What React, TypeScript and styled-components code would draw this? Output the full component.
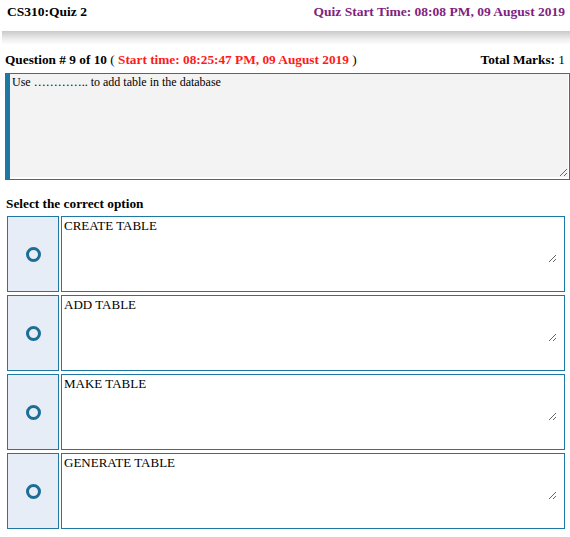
import React from 'react'
import styled, { createGlobalStyle } from 'styled-components'

const GlobalStyle = createGlobalStyle`
  body {
    margin: 0;
    background: #fff;
    font-family: "Liberation Serif", "Times New Roman", serif;
    color: #000;
  }
`

const blue = '#1f77a3'

const Header = styled.div`
  display: flex;
  justify-content: space-between;
  align-items: flex-start;
  height: 31px;
  box-sizing: border-box;
  padding: 4px 5px 0 7px;
  font-size: 13.5px;
  font-weight: bold;
`

const QuizTime = styled.span`
  color: #7f2380;
`

const ShadowBand = styled.div`
  height: 14px;
  margin-left: 2px;
  background: linear-gradient(to bottom, #c9c9c9 0%, #ececec 55%, #fff 100%);
`

const QuestionBar = styled.div`
  display: flex;
  justify-content: space-between;
  align-items: center;
  margin-top: 7px;
  height: 16px;
  padding: 0 5px 0 5px;
  font-size: 13.3px;
  font-weight: bold;
`

const Red = styled.span`
  color: #ff1a1a;
`

const Plain = styled.span`
  font-weight: normal;
`

const QuestionBox = styled.div`
  margin: 5px 0 0 5px;
  height: 105px;
  border: 1px solid ${blue};
  border-left: 5px solid ${blue};
  display: flex;
`

const QuestionText = styled.textarea`
  flex: 1;
  height: 101px;
  margin: 0 1px 0 0;
  border: none;
  outline: none;
  background: #f3f3f3;
  font-family: "Liberation Serif", "Times New Roman", serif;
  font-size: 12px;
  padding: 1px 2px;
  resize: vertical;
`

const SectionTitle = styled.div`
  margin: 16px 0 0 6px;
  height: 16px;
  font-size: 13.3px;
  font-weight: bold;
`

const Options = styled.div`
  display: grid;
  grid-template-columns: 52px 1fr;
  column-gap: 2px;
  row-gap: 3px;
  margin: 4px 5px 0 7px;
`

const RadioCell = styled.div`
  box-sizing: border-box;
  height: 76px;
  background: #e6edf7;
  border: 1px solid ${blue};
  display: flex;
  align-items: center;
  justify-content: center;
`

const Ring = styled.span`
  width: 15px;
  height: 15px;
  box-sizing: border-box;
  border-radius: 50%;
  border: 3.5px solid #1d6e95;
`

const OptionCell = styled.div`
  box-sizing: border-box;
  height: 76px;
  border: 1px solid ${blue};
  background: #fff;
`

const OptionText = styled.textarea`
  display: block;
  box-sizing: border-box;
  height: 46px;
  width: calc(100% - 7px);
  border: none;
  outline: none;
  background: #fff;
  font-family: "Liberation Serif", "Times New Roman", serif;
  font-size: 13px;
  padding: 1px 2px;
  resize: vertical;
`

const options = ['CREATE TABLE', 'ADD TABLE', 'MAKE TABLE', 'GENERATE TABLE']

export default function App() {
  return (
    <>
      <GlobalStyle />
      <Header>
        <span>CS310:Quiz 2</span>
        <QuizTime>Quiz Start Time: 08:08 PM, 09 August 2019</QuizTime>
      </Header>
      <ShadowBand />
      <QuestionBar>
        <span>
          Question # 9 of 10 <Plain>(</Plain> <Red>Start time: 08:25:47 PM, 09 August 2019</Red> <Plain>)</Plain>
        </span>
        <span>
          Total Marks: <Plain>1</Plain>
        </span>
      </QuestionBar>
      <QuestionBox>
        <QuestionText readOnly defaultValue="Use ………….. to add table in the database" />
      </QuestionBox>
      <SectionTitle>Select the correct option</SectionTitle>
      <Options>
        {options.map((o) => (
          <React.Fragment key={o}>
            <RadioCell>
              <Ring />
            </RadioCell>
            <OptionCell>
              <OptionText readOnly defaultValue={o} />
            </OptionCell>
          </React.Fragment>
        ))}
      </Options>
    </>
  )
}
